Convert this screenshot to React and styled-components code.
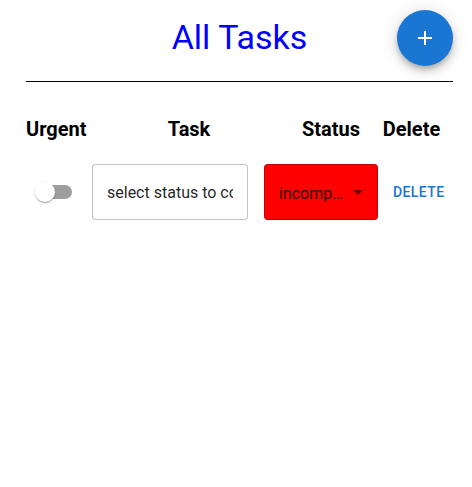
import React, { useState } from "react";
import styled, { createGlobalStyle } from "styled-components";

const GlobalStyle = createGlobalStyle`
	body {
		margin: 0;
		background: #ffffff;
		font-family: Roboto, "Liberation Sans", Arial, sans-serif;
		color: rgba(0, 0, 0, 0.87);
	}
	* {
		box-sizing: border-box;
	}
`;

const Page = styled.main`
	padding: 10px 19px 0 26px;
`;

const TopBar = styled.header`
	display: grid;
	grid-template-columns: 1fr auto 1fr;
	align-items: center;
	height: 56px;
`;

const Title = styled.h1`
	grid-column: 2;
	margin: 0;
	font-size: 34px;
	font-weight: 400;
	line-height: 1.235;
	color: #0000ff;
`;

const Fab = styled.button`
	grid-column: 3;
	justify-self: end;
	width: 56px;
	height: 56px;
	border: none;
	border-radius: 50%;
	background: #1976d2;
	color: #ffffff;
	display: flex;
	align-items: center;
	justify-content: center;
	padding: 0;
	cursor: pointer;
	box-shadow: 0px 3px 5px -1px rgba(0, 0, 0, 0.2),
		0px 6px 10px 0px rgba(0, 0, 0, 0.14),
		0px 1px 18px 0px rgba(0, 0, 0, 0.12);
`;

const Divider = styled.hr`
	margin: 15px 0 0;
	border: none;
	border-top: 1px solid #000000;
`;

const HeadRow = styled.div`
	display: grid;
	grid-template-columns: 60px 206px 78px 1fr;
	margin-top: 31px;
`;

const HeadCell = styled.div`
	text-align: center;
	font-size: 20px;
	font-weight: 700;
	line-height: 32px;
	color: #000000;
	white-space: nowrap;
`;

const TaskRow = styled.div`
	display: flex;
	align-items: center;
	margin-top: 19px;
`;

const SwitchRoot = styled.span`
	position: relative;
	display: inline-block;
	width: 58px;
	height: 38px;
	padding: 12px;
	margin-right: 8px;
	flex-shrink: 0;
	cursor: pointer;
`;

const SwitchTrack = styled.span`
	display: block;
	width: 100%;
	height: 100%;
	border-radius: 7px;
	background: ${(p) => (p.$on ? "#1976d2" : "#000000")};
	opacity: 0.38;
`;

const SwitchThumb = styled.span`
	position: absolute;
	top: 9px;
	left: ${(p) => (p.$on ? "29px" : "9px")};
	width: 20px;
	height: 20px;
	border-radius: 50%;
	background: ${(p) => (p.$on ? "#1976d2" : "#ffffff")};
	box-shadow: 0px 2px 1px -1px rgba(0, 0, 0, 0.2),
		0px 1px 1px 0px rgba(0, 0, 0, 0.14),
		0px 1px 3px 0px rgba(0, 0, 0, 0.12);
`;

const Field = styled.input`
	width: 156px;
	height: 56px;
	margin-right: 16px;
	padding: 16.5px 14px;
	border: 1px solid rgba(0, 0, 0, 0.23);
	border-radius: 4px;
	font: inherit;
	font-size: 16px;
	color: rgba(0, 0, 0, 0.87);
	outline: none;
	flex-shrink: 0;
`;

const SelectBox = styled.div`
	position: relative;
	width: 114px;
	height: 56px;
	margin-right: 7px;
	padding: 16.5px 32px 16.5px 14px;
	border: 1px solid rgba(0, 0, 0, 0.23);
	border-radius: 4px;
	background: ${(p) => p.$color};
	font-size: 16px;
	line-height: 1.4375em;
	color: rgba(0, 0, 0, 0.87);
	white-space: nowrap;
	overflow: hidden;
	text-overflow: ellipsis;
	flex-shrink: 0;
`;

const SelectArrow = styled.svg`
	position: absolute;
	right: 7px;
	top: calc(50% - 12px);
	width: 24px;
	height: 24px;
	fill: rgba(0, 0, 0, 0.54);
`;

const TextButton = styled.button`
	min-width: 64px;
	padding: 6px 8px;
	border: none;
	background: none;
	font-family: inherit;
	font-size: 14px;
	font-weight: 500;
	line-height: 1.75;
	letter-spacing: 0.02857em;
	text-transform: uppercase;
	color: #1976d2;
	cursor: pointer;
`;

const statusColors = {
	incomplete: "#ff0000",
	complete: "#00c853",
};

export default function App() {
	const [urgent, setUrgent] = useState(false);
	const status = "incomplete";

	return (
		<Page>
			<GlobalStyle />
			<TopBar>
				<Title>All Tasks</Title>
				<Fab aria-label="add">
					<svg width="24" height="24" viewBox="0 0 24 24" fill="currentColor">
						<path d="M19 13h-6v6h-2v-6H5v-2h6V5h2v6h6v2z" />
					</svg>
				</Fab>
			</TopBar>
			<Divider />

			<HeadRow>
				<HeadCell>Urgent</HeadCell>
				<HeadCell>Task</HeadCell>
				<HeadCell>Status</HeadCell>
				<HeadCell>Delete</HeadCell>
			</HeadRow>

			<TaskRow>
				<SwitchRoot onClick={() => setUrgent(!urgent)}>
					<SwitchTrack $on={urgent} />
					<SwitchThumb $on={urgent} />
				</SwitchRoot>
				<Field defaultValue="select status to complete" />
				<SelectBox $color={statusColors[status]}>
					{status}
					<SelectArrow viewBox="0 0 24 24">
						<path d="M7 10l5 5 5-5z" />
					</SelectArrow>
				</SelectBox>
				<TextButton>Delete</TextButton>
			</TaskRow>
		</Page>
	);
}
